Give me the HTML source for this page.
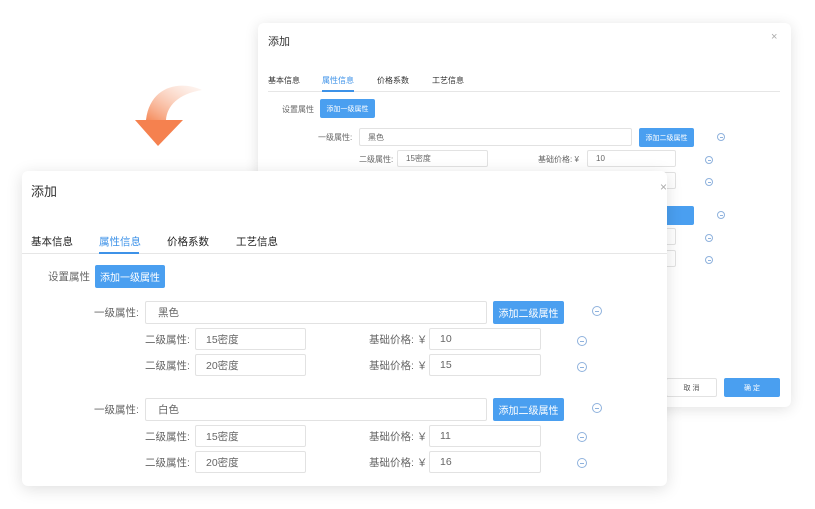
<!DOCTYPE html>
<html><head><meta charset="utf-8">
<style>
*{margin:0;padding:0;box-sizing:border-box}
body{width:815px;height:509px;background:#fff;position:relative;overflow:hidden;font-family:"Liberation Sans","Noto Sans CJK SC",sans-serif;color:#555}
.a{position:absolute;white-space:nowrap}
.dlg{position:absolute;background:#fff;border-radius:6px}
.inp{position:absolute;border:1px solid #e2e2e2;border-radius:2px;background:#fff;color:#666;display:flex;align-items:center;white-space:nowrap}
.btn{position:absolute;background:#4a9ff0;color:#fff;border-radius:2px;display:flex;align-items:center;justify-content:center;white-space:nowrap}
.ic{position:absolute;border:1px solid #8fb2dd;border-radius:50%}
.ic:after{content:"";position:absolute;left:25%;right:25%;top:50%;height:1px;margin-top:-.5px;background:#8fb2dd}
.b .btn{font-size:7px}
.f .btn{font-size:10px}
</style></head><body>

<svg class="a" style="left:130px;top:80px" width="80" height="70" viewBox="0 0 80 70">
<defs><linearGradient id="g" x1="1" y1="0" x2="0" y2="1"><stop offset="0" stop-color="#fbe3d8" stop-opacity="0.3"/><stop offset="1" stop-color="#f58a5a"/></linearGradient></defs>
<path d="M72 10 C50 0 20 6 16 40 L36 40 C37 26 48 14 72 10 Z" fill="url(#g)"/>
<path d="M5 40 L53 40 L28 66 Z" fill="#f5814f"/>
</svg>

<!-- back dialog -->
<div class="dlg b" style="left:258px;top:23px;width:533px;height:384px;box-shadow:0 2px 14px rgba(0,0,0,.12);font-size:8px">
<div class="a" style="left:10px;top:10px;font-size:11px;color:#333">添加</div>
<div class="a" style="left:513px;top:8px;font-size:11px;color:#aaa">×</div>
<div class="a" style="left:10px;top:52px;color:#333">基本信息</div>
<div class="a" style="left:64px;top:52px;color:#3d92e8">属性信息</div>
<div class="a" style="left:119px;top:52px;color:#333">价格系数</div>
<div class="a" style="left:174px;top:52px;color:#333">工艺信息</div>
<div class="a" style="left:10px;top:68px;width:512px;height:1px;background:#e6e6e6"></div>
<div class="a" style="left:64px;top:67px;width:32px;height:2px;background:#3d92e8"></div>
<div class="a" style="left:24px;top:81px;color:#666">设置属性</div>
<div class="btn" style="left:62px;top:76px;width:55px;height:19px">添加一级属性</div>
<div class="a" style="left:60px;top:109px;color:#666">一级属性:</div>
<div class="inp" style="left:101px;top:105px;width:273px;height:18px;padding:0 8px">黑色</div>
<div class="btn" style="left:381px;top:105px;width:55px;height:19px">添加二级属性</div>
<div class="ic" style="left:459px;top:110px;width:8px;height:8px"></div>
<div class="a" style="left:101px;top:131px;color:#666">二级属性:</div>
<div class="inp" style="left:139px;top:127px;width:91px;height:17px;padding:0 8px">15密度</div>
<div class="a" style="left:280px;top:131px;color:#666">基础价格: ¥</div>
<div class="inp" style="left:329px;top:127px;width:89px;height:17px;padding:0 8px">10</div>
<div class="ic" style="left:447px;top:133px;width:8px;height:8px"></div>
<div class="inp" style="left:329px;top:149px;width:89px;height:17px"></div>
<div class="ic" style="left:447px;top:155px;width:8px;height:8px"></div>
<div class="btn" style="left:381px;top:183px;width:55px;height:19px"></div>
<div class="ic" style="left:459px;top:188px;width:8px;height:8px"></div>
<div class="inp" style="left:329px;top:205px;width:89px;height:17px"></div>
<div class="ic" style="left:447px;top:211px;width:8px;height:8px"></div>
<div class="inp" style="left:329px;top:227px;width:89px;height:17px"></div>
<div class="ic" style="left:447px;top:233px;width:8px;height:8px"></div>
<div class="inp" style="left:408px;top:355px;width:51px;height:19px;justify-content:center;color:#555;font-size:7px">取 消</div>
<div class="btn" style="left:466px;top:355px;width:56px;height:19px">确 定</div>
</div>

<!-- front dialog -->
<div class="dlg f" style="left:22px;top:171px;width:645px;height:315px;box-shadow:0 3px 16px rgba(0,0,0,.13);font-size:10.5px">
<div class="a" style="left:9px;top:10px;font-size:13px;color:#333">添加</div>
<div class="a" style="left:638px;top:9px;font-size:12px;color:#aaa">×</div>
<div class="a" style="left:9px;top:63px;color:#222">基本信息</div>
<div class="a" style="left:77px;top:63px;color:#3d92e8">属性信息</div>
<div class="a" style="left:145px;top:63px;color:#222">价格系数</div>
<div class="a" style="left:214px;top:63px;color:#222">工艺信息</div>
<div class="a" style="left:0;top:82px;width:645px;height:1px;background:#e6e6e6"></div>
<div class="a" style="left:77px;top:81px;width:40px;height:2px;background:#3d92e8"></div>
<div class="a" style="left:26px;top:98px;color:#666">设置属性</div>
<div class="btn" style="left:73px;top:94px;width:70px;height:23px">添加一级属性</div>

<div class="a" style="left:72px;top:134px;color:#666">一级属性:</div>
<div class="inp" style="left:123px;top:130px;width:342px;height:23px;padding:0 12px">黑色</div>
<div class="btn" style="left:471px;top:130px;width:71px;height:23px">添加二级属性</div>
<div class="ic" style="left:570px;top:135px;width:10px;height:10px"></div>
<div class="a" style="left:123px;top:161px;color:#666">二级属性:</div>
<div class="inp" style="left:173px;top:157px;width:111px;height:22px;padding:0 10px">15密度</div>
<div class="a" style="left:347px;top:161px;color:#666">基础价格: ￥</div>
<div class="inp" style="left:407px;top:157px;width:112px;height:22px;padding:0 10px">10</div>
<div class="ic" style="left:555px;top:165px;width:10px;height:10px"></div>
<div class="a" style="left:123px;top:187px;color:#666">二级属性:</div>
<div class="inp" style="left:173px;top:183px;width:111px;height:22px;padding:0 10px">20密度</div>
<div class="a" style="left:347px;top:187px;color:#666">基础价格: ￥</div>
<div class="inp" style="left:407px;top:183px;width:112px;height:22px;padding:0 10px">15</div>
<div class="ic" style="left:555px;top:191px;width:10px;height:10px"></div>

<div class="a" style="left:72px;top:231px;color:#666">一级属性:</div>
<div class="inp" style="left:123px;top:227px;width:342px;height:23px;padding:0 12px">白色</div>
<div class="btn" style="left:471px;top:227px;width:71px;height:23px">添加二级属性</div>
<div class="ic" style="left:570px;top:232px;width:10px;height:10px"></div>
<div class="a" style="left:123px;top:258px;color:#666">二级属性:</div>
<div class="inp" style="left:173px;top:254px;width:111px;height:22px;padding:0 10px">15密度</div>
<div class="a" style="left:347px;top:258px;color:#666">基础价格: ￥</div>
<div class="inp" style="left:407px;top:254px;width:112px;height:22px;padding:0 10px">11</div>
<div class="ic" style="left:555px;top:261px;width:10px;height:10px"></div>
<div class="a" style="left:123px;top:284px;color:#666">二级属性:</div>
<div class="inp" style="left:173px;top:280px;width:111px;height:22px;padding:0 10px">20密度</div>
<div class="a" style="left:347px;top:284px;color:#666">基础价格: ￥</div>
<div class="inp" style="left:407px;top:280px;width:112px;height:22px;padding:0 10px">16</div>
<div class="ic" style="left:555px;top:287px;width:10px;height:10px"></div>
</div>
</body></html>
